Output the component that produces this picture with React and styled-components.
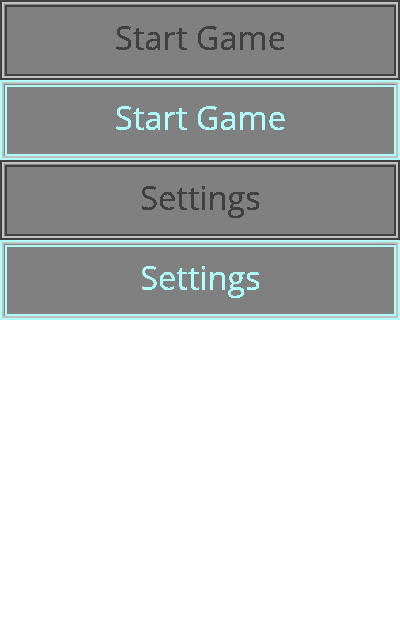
import React from "react";
import styled, { createGlobalStyle } from "styled-components";

const Global = createGlobalStyle`
  html, body { margin: 0; padding: 0; background: #ffffff; }
  #root { width: 400px; }
`;

const Menu = styled.div`
  display: flex;
  flex-direction: column;
  width: 400px;
`;

const Outer = styled.div`
  box-sizing: border-box;
  height: 80px;
  border: 2px solid ${(p) => p.$color};
  padding: 2px;
  background: #c0c0c0;
  display: flex;
`;

const Well = styled.div`
  flex: 1;
  display: flex;
  padding: 1px 0 0 1px;
  background: #808080;
`;

const Frame = styled.div`
  flex: 1;
  box-sizing: border-box;
  border: 2px solid ${(p) => p.$color};
  display: flex;
  align-items: center;
  justify-content: center;
  padding-bottom: 5px;
`;

const Label = styled.span`
  font-family: "Open Sans", "Liberation Sans", Arial, sans-serif;
  font-size: 32.5px;
  line-height: 1;
  color: ${(p) => p.$color};
  filter: url(#crisp);
`;

const HiddenSvg = styled.svg`
  position: absolute;
  width: 0;
  height: 0;
`;

function MenuButton({ label, active }) {
  const color = active ? "#b0ffff" : "#404040";
  return (
    <Outer $color={color}>
      <Well>
        <Frame $color={color}>
          <Label $color={color}>{label}</Label>
        </Frame>
      </Well>
    </Outer>
  );
}

export default function App() {
  return (
    <>
      <Global />
      <HiddenSvg aria-hidden="true">
        <filter id="crisp" x="0" y="0" width="100%" height="100%">
          <feComponentTransfer>
            <feFuncA type="discrete" tableValues="0 1 1" />
          </feComponentTransfer>
        </filter>
      </HiddenSvg>
      <Menu>
        <MenuButton label="Start Game" />
        <MenuButton label="Start Game" active />
        <MenuButton label="Settings" />
        <MenuButton label="Settings" active />
      </Menu>
    </>
  );
}
